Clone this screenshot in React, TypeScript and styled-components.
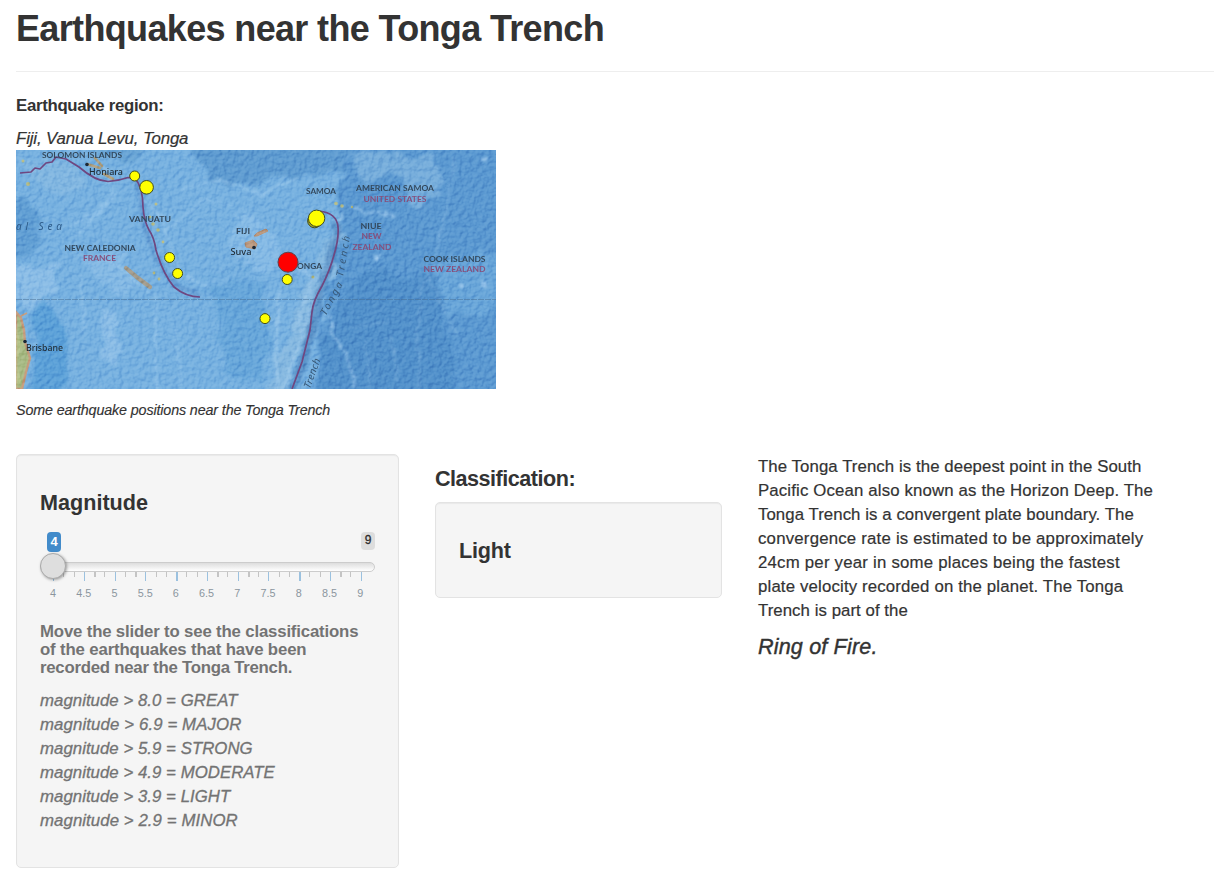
import React from "react";
import styled, { createGlobalStyle } from "styled-components";

const GlobalStyle = createGlobalStyle`
  *, *::before, *::after { box-sizing: border-box; }
  body {
    margin: 0;
    background: #fff;
    color: #333;
    font-family: "Liberation Sans", Arial, sans-serif;
    font-size: 16.8px;
    line-height: 24px;
    overflow: hidden;
  }
`;

const Page = styled.main`
  height: 892px;
  padding: 9px 0 0 16px;
  overflow: hidden;
`;

const Header = styled.header`
  height: 63px;
  border-bottom: 1px solid #eee;
`;

const Title = styled.h2`
  margin: 0;
  font-size: 36px;
  font-weight: 700;
  line-height: 40px;
  letter-spacing: -0.65px;
  white-space: nowrap;
`;

const RegionLabel = styled.h5`
  margin: 25px 0 12px;
  font-size: 16.8px;
  line-height: 18px;
  font-weight: 700;
  letter-spacing: -0.3px;
`;

const Region = styled.em`
  display: block;
  height: 23px;
  line-height: 24px;
  letter-spacing: -0.12px;
  -webkit-text-stroke: 0.2px #333;
`;

const Caption = styled.em`
  display: block;
  margin-top: 9px;
  height: 24px;
  font-size: 14.3px;
  letter-spacing: -0.13px;
  white-space: nowrap;
  -webkit-text-stroke: 0.15px #333;
`;

const Columns = styled.section`
  display: grid;
  grid-template-columns: 383px 287px 400px;
  column-gap: 36px;
  align-items: start;
  margin-top: 32px;
`;

const Well = styled.div<{ $height: number }>`
  height: ${(p) => p.$height}px;
  padding: 36px 23px 0;
  background: #f5f5f5;
  border: 1px solid #e3e3e3;
  border-radius: 5px;
  box-shadow: inset 0 1px 1px rgba(0, 0, 0, 0.05);
`;

const Heading = styled.h4<{ $spacing?: number }>`
  margin: 0;
  font-size: 21.6px;
  line-height: 24px;
  font-weight: 700;
  letter-spacing: ${(p) => p.$spacing ?? 0}px;
`;

const ResultColumn = styled.div`
  display: flex;
  flex-direction: column;
  gap: 11px;
  padding-top: 13px;
`;

const Description = styled.div`
  padding-top: 1px;
  -webkit-text-stroke: 0.2px #333;
`;

const SliderBox = styled.div`
  width: 335px;
  margin-top: 17px;
`;

const BadgeRow = styled.div`
  display: flex;
  justify-content: space-between;
  align-items: flex-start;
  height: 20px;
  padding-left: 7px;
`;

const Badge = styled.span<{ $active?: boolean }>`
  width: 14px;
  height: ${(p) => (p.$active ? 20 : 18)}px;
  border-radius: 4px;
  background: ${(p) => (p.$active ? "#428bca" : "#ddd")};
  color: ${(p) => (p.$active ? "#fff" : "#333")};
  font-size: ${(p) => (p.$active ? 13 : 12)}px;
  font-weight: ${(p) => (p.$active ? 700 : 400)};
  line-height: ${(p) => (p.$active ? 19 : 16)}px;
  text-align: center;
  -webkit-text-stroke: ${(p) => (p.$active ? 0 : 0.3)}px #222;
`;

const Track = styled.div`
  position: relative;
  height: 10px;
  margin-top: 10px;
  border: 1px solid #ccc;
  border-radius: 6px;
  background: linear-gradient(#ddd, #fff);
`;

const Handle = styled.div`
  position: absolute;
  left: -1px;
  top: -10px;
  width: 26px;
  height: 26px;
  border: 1px solid #aaa;
  border-radius: 50%;
  background: #dedede;
  box-shadow: 1px 1px 3px rgba(0, 0, 0, 0.35);
`;

const Scale = styled.svg`
  display: block;
  width: 335px;
  height: 28px;
  overflow: visible;
`;

const Help = styled.h5`
  margin: 23px 0 12px;
  color: #737373;
  font-size: 16.8px;
  font-weight: 700;
`;

const HelpLine = styled.span<{ $spacing: number }>`
  display: block;
  line-height: 18px;
  white-space: nowrap;
  letter-spacing: ${(p) => p.$spacing}px;
`;

const Legend = styled.div`
  color: #737373;
  font-style: italic;
  -webkit-text-stroke: 0.3px #737373;
`;

const Line = styled.div<{ $spacing: number }>`
  line-height: 24px;
  white-space: nowrap;
  letter-spacing: ${(p) => p.$spacing}px;
`;

const Ring = styled.h4`
  margin: 12px 0 0;
  font-size: 21.6px;
  font-style: italic;
  font-weight: 400;
  line-height: 24px;
  letter-spacing: 0.15px;
  -webkit-text-stroke: 0.4px #333;
`;

const MapSvg = styled.svg`
  display: block;
  width: 480px;
  height: 239px;
`;

const Relief = styled.rect`
  mix-blend-mode: soft-light;
  opacity: 0.55;
`;

const paragraph: [string, number][] = [
  ["The Tonga Trench is the deepest point in the South", 0.08],
  ["Pacific Ocean also known as the Horizon Deep. The", 0.15],
  ["Tonga Trench is a convergent plate boundary. The", 0.07],
  ["convergence rate is estimated to be approximately", 0.21],
  ["24cm per year in some places being the fastest", 0.22],
  ["plate velocity recorded on the planet. The Tonga", 0.16],
  ["Trench is part of the", 0.06],
];

const help: [string, number][] = [
  ["Move the slider to see the classifications", -0.17],
  ["of the earthquakes that have been", -0.15],
  ["recorded near the Tonga Trench.", -0.25],
];

const legend: [string, number][] = [
  ["magnitude > 8.0 = GREAT", 0.04],
  ["magnitude > 6.9 = MAJOR", 0.12],
  ["magnitude > 5.9 = STRONG", 0.04],
  ["magnitude > 4.9 = MODERATE", 0.04],
  ["magnitude > 3.9 = LIGHT", 0.04],
  ["magnitude > 2.9 = MINOR", 0.08],
];

const ticks = Array.from({ length: 31 }, (_, i) => i);

const quakes = [
  { x: 118.7, y: 26, r: 5 },
  { x: 130.6, y: 37.3, r: 6.8 },
  { x: 153.6, y: 107.5, r: 5 },
  { x: 161.6, y: 123.5, r: 5 },
  { x: 298.6, y: 70.8, r: 7, old: true },
  { x: 300.6, y: 68.3, r: 8.2 },
  { x: 271.2, y: 129.5, r: 5 },
  { x: 249, y: 168.6, r: 5 },
  { x: 272, y: 112.2, r: 10, strong: true },
];

type Place = { t: string; x: number; y: number; w: number; c?: string; city?: boolean };
const places: Place[] = [
  { t: "SOLOMON ISLANDS", x: 26, y: 7.5, w: 80 },
  { t: "Honiara", x: 73, y: 25, w: 34, city: true },
  { t: "VANUATU", x: 113, y: 72, w: 42 },
  { t: "NEW CALEDONIA", x: 48.5, y: 100.5, w: 71 },
  { t: "FRANCE", x: 67, y: 111, w: 33, c: "#86507c" },
  { t: "FIJI", x: 220, y: 84, w: 14 },
  { t: "Suva", x: 214.5, y: 104.5, w: 21, city: true },
  { t: "SAMOA", x: 290, y: 43.5, w: 30 },
  { t: "AMERICAN SAMOA", x: 340, y: 41, w: 78 },
  { t: "UNITED STATES", x: 347.5, y: 51.5, w: 63, c: "#86507c" },
  { t: "NIUE", x: 344.5, y: 78.5, w: 21 },
  { t: "NEW", x: 345.5, y: 89, w: 20, c: "#86507c" },
  { t: "ZEALAND", x: 336.5, y: 99.5, w: 39, c: "#86507c" },
  { t: "ONGA", x: 281, y: 118.5, w: 25 },
  { t: "COOK ISLANDS", x: 407.5, y: 111.5, w: 62 },
  { t: "NEW ZEALAND", x: 407.5, y: 122, w: 62, c: "#86507c" },
  { t: "Brisbane", x: 10, y: 201, w: 37, city: true },
];

const MapPicture = () => (
  <MapSvg viewBox="0 0 480 239" role="img" aria-label="Earthquake map">
    <defs>
      <filter id="relief" x="0" y="0" width="100%" height="100%" colorInterpolationFilters="sRGB">
        <feTurbulence type="fractalNoise" baseFrequency="0.2" numOctaves="3" seed="11" result="n" />
        <feDiffuseLighting in="n" surfaceScale="2.2" diffuseConstant="0.67" lightingColor="#fff">
          <feDistantLight azimuth="225" elevation="50" />
        </feDiffuseLighting>
      </filter>
      <filter id="soft" x="-20%" y="-20%" width="140%" height="140%" colorInterpolationFilters="sRGB">
        <feTurbulence type="fractalNoise" baseFrequency="0.045" numOctaves="3" seed="4" result="n" />
        <feDisplacementMap in="SourceGraphic" in2="n" scale="24" xChannelSelector="R" yChannelSelector="G" result="d" />
        <feGaussianBlur in="d" stdDeviation="1.8" />
      </filter>
      <filter id="ridge" x="-20%" y="-20%" width="140%" height="140%" colorInterpolationFilters="sRGB">
        <feTurbulence type="fractalNoise" baseFrequency="0.09" numOctaves="2" seed="8" result="n" />
        <feDisplacementMap in="SourceGraphic" in2="n" scale="8" xChannelSelector="R" yChannelSelector="G" result="d" />
        <feGaussianBlur in="d" stdDeviation="0.8" />
      </filter>
      <clipPath id="frame"><rect width="480" height="239" /></clipPath>
    </defs>
    <g clipPath="url(#frame)">
      <rect width="480" height="239" fill="#77b1e0" />
      <g filter="url(#soft)">
        <path d="M322 48L335 -20H510V270H285L308 170Z" fill="#5b99d1" />
        <path d="M345 120L425 125L440 260H290L308 185Z" fill="#5291cb" />
        <path d="M160 -20H345L330 22L280 25L240 35L195 30Z" fill="#5f9cd1" />
        <path d="M-20 45L25 65L28 90L10 108L-20 110Z" fill="#619fd4" />
        <path d="M22 155L44 162L55 190L48 235L16 260L18 180Z" fill="#5ca1d8" />
        <path d="M196 135L250 130L255 190L245 239L210 220Z" fill="#68a7da" />
        <path d="M50 -15L110 15L140 -15Z" fill="#68a4d5" />
        <path d="M410 115L490 100V160L440 165Z" fill="#69a6d9" />
        <path d="M375 0L425 5L425 45L405 60L382 30Z" fill="#76addb" />
        <path d="M335 10L365 0L385 20L350 35Z" fill="#76addb" />
        <path d="M0 115L45 115L35 145L18 155L0 150Z" fill="#8bbde6" />
        <path d="M80 160L98 168L104 190L100 215L88 205Z" fill="#8bbde6" />
        <path d="M60 105L105 105L125 135L110 150L85 132Z" fill="#84b9e4" />
        <path d="M318 75L330 80L292 180L270 250L248 250L278 165Z" fill="#85b8e0" />
        <path d="M221 65L250 70L262 98L282 115L240 118L205 100Z" fill="#85bae5" />
        <path d="M8 8L55 18L80 38L45 45L10 25Z" fill="#82b7e1" />
      </g>
      <g fill="none" stroke="#a3cdee" strokeLinecap="round" filter="url(#ridge)">
        <path d="M103 42Q82 66 54 75M89 15L98 45L61 86M124 45L145 67L156 102L164 124L190 136M139 145L141 239M65 125L68 180M90 110L110 123L135 144M165 40L205 30L245 45L280 28M150 80L190 50L215 55M160 180L165 239" strokeWidth="2" opacity=".55" />
        <path d="M184 142Q225 138 240 108M190 128Q215 125 230 108" stroke="#5b9fd6" strokeWidth="1.8" opacity=".5" />
        <path d="M325 65L321 92L290 172L267 239M277 110L296 128L279 180M263 140L260 239" strokeWidth="3.5" opacity=".5" />
        <path d="M314 165L319 187L330 206L340 239" strokeWidth="3" strokeDasharray="4 4" opacity=".65" />
        <path d="M438 10L428 67L418 112L405 142L401 190L404 239M412 125L440 185M350 190L354 239M375 185L382 230M336 176L370 172" strokeWidth="1.5" opacity=".4" />
        <path d="M336 58L351 62L378 67M360 107L366 102" strokeWidth="3" strokeDasharray="4 4" opacity=".65" />
        <path d="M467 9H468M467 134H468M359 107H360M445 135H446" strokeWidth="4" opacity=".85" />
      </g>
      <path d="M322 72Q318 105 303 147Q295 191 277 239" fill="none" stroke="#356eae" strokeWidth="9" opacity=".45" filter="url(#ridge)" />
      <path d="M120 30Q127 47 128 75Q138 107 158 135L184 145" fill="none" stroke="#3a70b6" strokeWidth="5" opacity=".3" filter="url(#ridge)" />
      <path d="M0 162L5 168L8 180L9 192L14 208L10 222L6 239H0Z" fill="#a9bb86" stroke="#c59b7c" strokeWidth="2.4" />
      <path d="M0 176L5 195L1 213L5 231L0 239Z" fill="#bfc98f" opacity=".6" />
      <path d="M5 166L11 163" stroke="#c59b7c" strokeWidth="1.6" />
      <g fill="none" stroke="#a39c8d" strokeLinecap="round">
        <path d="M110 118L122 128L134 137" strokeWidth="4.2" />
        <path d="M71 14L84 18M88 24L97 29M79 8L86 16" stroke="#b0a080" strokeWidth="2.6" />
      </g>
      <path d="M241 83L250 79L252 81L241 86L238 86ZM229 93L237 90L241 94L239 99L230 97Z" fill="#bd9c83" stroke="#b89275" />
      <g fill="#b5bb85">
        <circle cx="140" cy="54" r="1.5" /><circle cx="134" cy="67" r="1.5" /><circle cx="137" cy="74" r="1.8" /><circle cx="142" cy="80" r="1.8" /><circle cx="147" cy="92" r="1.4" />
        <circle cx="12" cy="34" r="2" /><circle cx="7" cy="11" r="1.5" /><circle cx="320" cy="53.5" r="1.8" /><circle cx="326" cy="56" r="1.8" /><circle cx="336" cy="57" r="1.2" />
        <circle cx="138" cy="123" r="1.4" /><circle cx="143" cy="129" r="1.4" /><circle cx="297" cy="127" r="1.6" />
      </g>
      <Relief width="480" height="239" filter="url(#relief)" />
      <path d="M0 149.5H480" stroke="#496e92" opacity=".5" strokeDasharray="6 1" />
      <g fill="none" stroke="#6f4780" strokeWidth="1.7" strokeLinejoin="round">
        <path d="M4 23L15 22L19 18L24 19L30 13L36 12L40 7L50 9L63 17Q79 31 92 31.5Q102 31 112 27.5L119 28Q127 38 127 57Q128 71 133 80Q138 87 140 100Q147 124 158 137Q170 147 184 147" />
        <path d="M303 61Q321 63 322 77Q323 89 318 105Q314 120 306 136Q297 151 296 162L294 180L286 212L276 239" />
      </g>
      {places.map((p) => (
        <text key={p.t + p.y} x={p.x} y={p.y} textLength={p.w} lengthAdjust="spacingAndGlyphs"
          fill={p.c ?? (p.city ? "#1f2a33" : "#33485c")} fontFamily={p.city ? "Noto Sans, sans-serif" : "Lato, sans-serif"}
          fontSize={p.city ? 8.8 : 7.8} fontWeight={p.city ? 500 : 700}>{p.t}</text>
      ))}
      <text x="0" y="80" textLength="46" fill="#2d5a88" fontFamily="Noto Sans, sans-serif" fontSize="10" fontStyle="italic">al Sea</text>
      <g fill="#375878" fontFamily="Noto Sans, sans-serif" fontSize="10" fontStyle="italic">
        <text transform="translate(310 166) rotate(-62)" textLength="36">Tonga</text>
        <text transform="translate(327 127) rotate(-80)" textLength="41">Trench</text>
        <text transform="translate(294 239) rotate(-70)" textLength="31">Trench</text>
      </g>
      <g fill="#1b2835"><circle cx="71" cy="14.5" r="1.8" /><circle cx="238" cy="97.5" r="1.8" /><circle cx="9" cy="191.5" r="1.8" /></g>
      {quakes.map((q) => (
        <circle key={q.x} cx={q.x} cy={q.y} r={q.r} fill={q.strong ? "#f00" : q.old ? "#a5a51c" : "#ff0"} stroke={q.strong ? "#62404a" : "#424b20"} strokeWidth="1" />
      ))}
    </g>
  </MapSvg>
);

export default function App() {
  return (
    <>
      <GlobalStyle />
      <Page>
        <Header><Title>Earthquakes near the Tonga Trench</Title></Header>
        <RegionLabel>Earthquake region:</RegionLabel>
        <Region>Fiji, Vanua Levu, Tonga</Region>
        <MapPicture />
        <Caption>Some earthquake positions near the Tonga Trench</Caption>
        <Columns>
          <Well $height={414}>
            <Heading>Magnitude</Heading>
            <SliderBox>
              <BadgeRow><Badge $active>4</Badge><Badge>9</Badge></BadgeRow>
              <Track><Handle /></Track>
              <Scale viewBox="0 0 335 28">
                {ticks.map((i) => {
                  const major = i % 3 === 0;
                  const wide = [4, 8, 12, 16, 19, 24, 28].includes(i);
                  return <rect key={i} x={Math.round(13.2 + i * 10.25)} y="0" width={wide ? 2 : 1} height={major ? 9 : 5} fill={major ? "#9bc1df" : "#c4c4c4"} />;
                })}
                {ticks.filter((i) => i % 3 === 0).map((i) => (
                  <text key={i} x={13 + i * 10.24} y="25" textAnchor="middle" fontSize="10.8" fill="#8b959e">{4 + i / 6}</text>
                ))}
              </Scale>
            </SliderBox>
            <Help>{help.map(([t, s]) => <HelpLine key={t} $spacing={s}>{t}</HelpLine>)}</Help>
            <Legend>{legend.map(([t, s]) => <Line key={t} $spacing={s}>{t}</Line>)}</Legend>
          </Well>
          <ResultColumn>
            <Heading $spacing={-0.5}>Classification:</Heading>
            <Well $height={96}><Heading $spacing={-0.2}>Light</Heading></Well>
          </ResultColumn>
          <Description>
            {paragraph.map(([t, s]) => <Line key={t} $spacing={s}>{t}</Line>)}
            <Ring>Ring of Fire.</Ring>
          </Description>
        </Columns>
      </Page>
    </>
  );
}
